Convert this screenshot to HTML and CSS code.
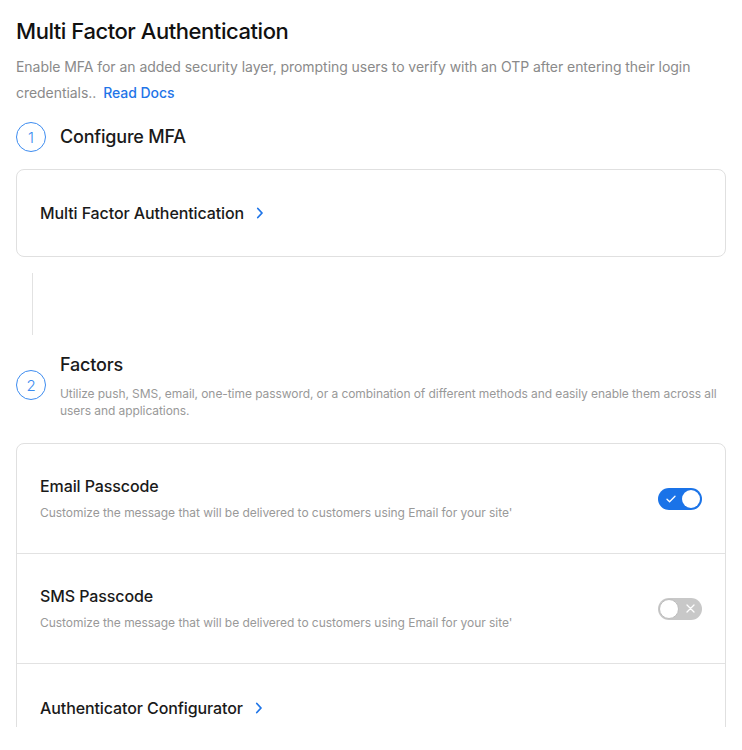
FILE: index.html
```html
<!DOCTYPE html>
<html>
<head>
  <title>Multi Factor Authentication</title>
  <link rel="stylesheet" href="styles.css">
</head>
<body>
  <div class="page">
    <h1>Multi Factor Authentication</h1>
    <p class="intro">Enable MFA for an added security layer, prompting users to verify with an OTP after entering their login credentials.. <a href="#" class="docs-link">Read Docs</a></p>

    <div class="step">
      <div class="step-num">1</div>
      <div class="step-text">
        <h2>Configure MFA</h2>
      </div>
    </div>

    <div class="card">
      <div class="row link-row">
        <span class="row-title">Multi Factor Authentication</span>
        <svg class="chevron" width="8" height="12" viewBox="0 0 8 12"><path d="M1.8 1.5 6 6l-4.2 4.5" fill="none" stroke="#1f75e8" stroke-width="1.8" stroke-linecap="round" stroke-linejoin="round"/></svg>
      </div>
    </div>

    <div class="step-line"></div>

    <div class="step">
      <div class="step-num">2</div>
      <div class="step-text">
        <h2>Factors</h2>
        <p>Utilize push, SMS, email, one-time password, or a combination of different methods and easily enable them across all users and applications.</p>
      </div>
    </div>

    <div class="card factors">
      <div class="row">
        <div class="row-info">
          <div class="row-title">Email Passcode</div>
          <div class="row-desc">Customize the message that will be delivered to customers using Email for your site'</div>
        </div>
        <div class="toggle on">
          <svg class="toggle-mark" width="10" height="8" viewBox="0 0 10 8"><path d="M1 4.2 3.6 6.8 9 1.2" fill="none" stroke="#fff" stroke-width="1.3" stroke-linecap="round" stroke-linejoin="round"/></svg>
          <span class="knob"></span>
        </div>
      </div>
      <div class="row">
        <div class="row-info">
          <div class="row-title">SMS Passcode</div>
          <div class="row-desc">Customize the message that will be delivered to customers using Email for your site'</div>
        </div>
        <div class="toggle off">
          <span class="knob"></span>
          <svg class="toggle-mark" width="9" height="9" viewBox="0 0 9 9"><path d="M1 1l7 7M8 1 1 8" fill="none" stroke="#fff" stroke-width="1.3" stroke-linecap="round"/></svg>
        </div>
      </div>
      <div class="row link-row">
        <span class="row-title">Authenticator Configurator</span>
        <svg class="chevron" width="8" height="12" viewBox="0 0 8 12"><path d="M1.8 1.5 6 6l-4.2 4.5" fill="none" stroke="#1f75e8" stroke-width="1.8" stroke-linecap="round" stroke-linejoin="round"/></svg>
      </div>
    </div>
  </div>
</body>
</html>
```

FILE: styles.css
```css
body {
  font-family: Inter, "Noto Sans", sans-serif;
  background-color: #ffffff;
  color: #1a1a1a;
  margin: 0;
  padding: 0;
}

.page {
  height: 727px;
  overflow: hidden;
  padding: 16px 16px 0 16px;
  box-sizing: border-box;
}

h1 {
  margin: 0;
  font-size: 22px;
  line-height: 30px;
  font-weight: 500;
  color: #111111;
  letter-spacing: -0.45px;
}

.intro {
  margin: 8px 0 0 0;
  font-size: 14px;
  line-height: 26px;
  color: #8a8a8a;
  letter-spacing: -0.05px;
}

.docs-link {
  display: inline-block;
  margin-left: 3px;
  color: #1f75e8;
  font-weight: 500;
  text-decoration: none;
}

/* Steps */

.step {
  display: flex;
  align-items: center;
  margin-top: 16px;
}

.step-num {
  width: 30px;
  height: 30px;
  flex-shrink: 0;
  border: 1px solid #3d8cf0;
  border-radius: 50%;
  box-sizing: border-box;
  display: flex;
  align-items: center;
  justify-content: center;
  color: #3d8cf0;
  font-size: 15px;
  font-weight: 300;
}

.step-text {
  margin-left: 14px;
}

.step-text h2 {
  margin: 0;
  font-size: 18px;
  line-height: 24px;
  font-weight: 500;
  color: #1a1a1a;
  letter-spacing: -0.2px;
}

.step-text p {
  margin: 8px 0 0 0;
  font-size: 12px;
  line-height: 17px;
  color: #999999;
  letter-spacing: -0.07px;
}

.step-line {
  width: 1px;
  height: 62px;
  margin: 16px 0 18px 16px;
  background-color: #e2e2e2;
}

.step-line + .step {
  margin-top: 0;
  align-items: flex-start;
}

.step-line + .step .step-num {
  margin-top: 17px;
}

/* Cards */

.card {
  margin-top: 17px;
  border: 1px solid #e0e0e0;
  border-radius: 8px;
  background-color: #ffffff;
}

.factors {
  margin-top: 24px;
}

.row {
  display: flex;
  align-items: center;
  justify-content: space-between;
  height: 109px;
  padding: 0 23px;
  border-bottom: 1px solid #e2e2e2;
}

.row:last-child {
  border-bottom: none;
}

.row-info {
  margin-top: -1px;
}

.link-row {
  justify-content: flex-start;
  height: 86px;
}

.factors .link-row {
  height: 88px;
}

.row-title {
  font-size: 16px;
  line-height: 22px;
  font-weight: 500;
  color: #1a1a1a;
  letter-spacing: -0.1px;
}

.row-desc {
  margin-top: 7px;
  font-size: 12px;
  line-height: 17px;
  color: #999999;
  letter-spacing: -0.05px;
}

.chevron {
  margin-left: 12px;
}

/* Toggles */

.toggle {
  width: 44px;
  height: 22px;
  border-radius: 11px;
  box-sizing: border-box;
  display: flex;
  align-items: center;
  justify-content: space-between;
  padding: 0 2px 0 8px;
  flex-shrink: 0;
}

.toggle.on {
  background-color: #1a73e8;
}

.toggle.off {
  background-color: #c8c8c8;
  padding: 0 7px 0 1px;
}

.knob {
  width: 18px;
  height: 18px;
  border-radius: 50%;
  background-color: #ffffff;
  box-sizing: border-box;
}

.toggle.off .knob {
  width: 20px;
  height: 20px;
  border: 1px solid #bdbdbd;
}
```
